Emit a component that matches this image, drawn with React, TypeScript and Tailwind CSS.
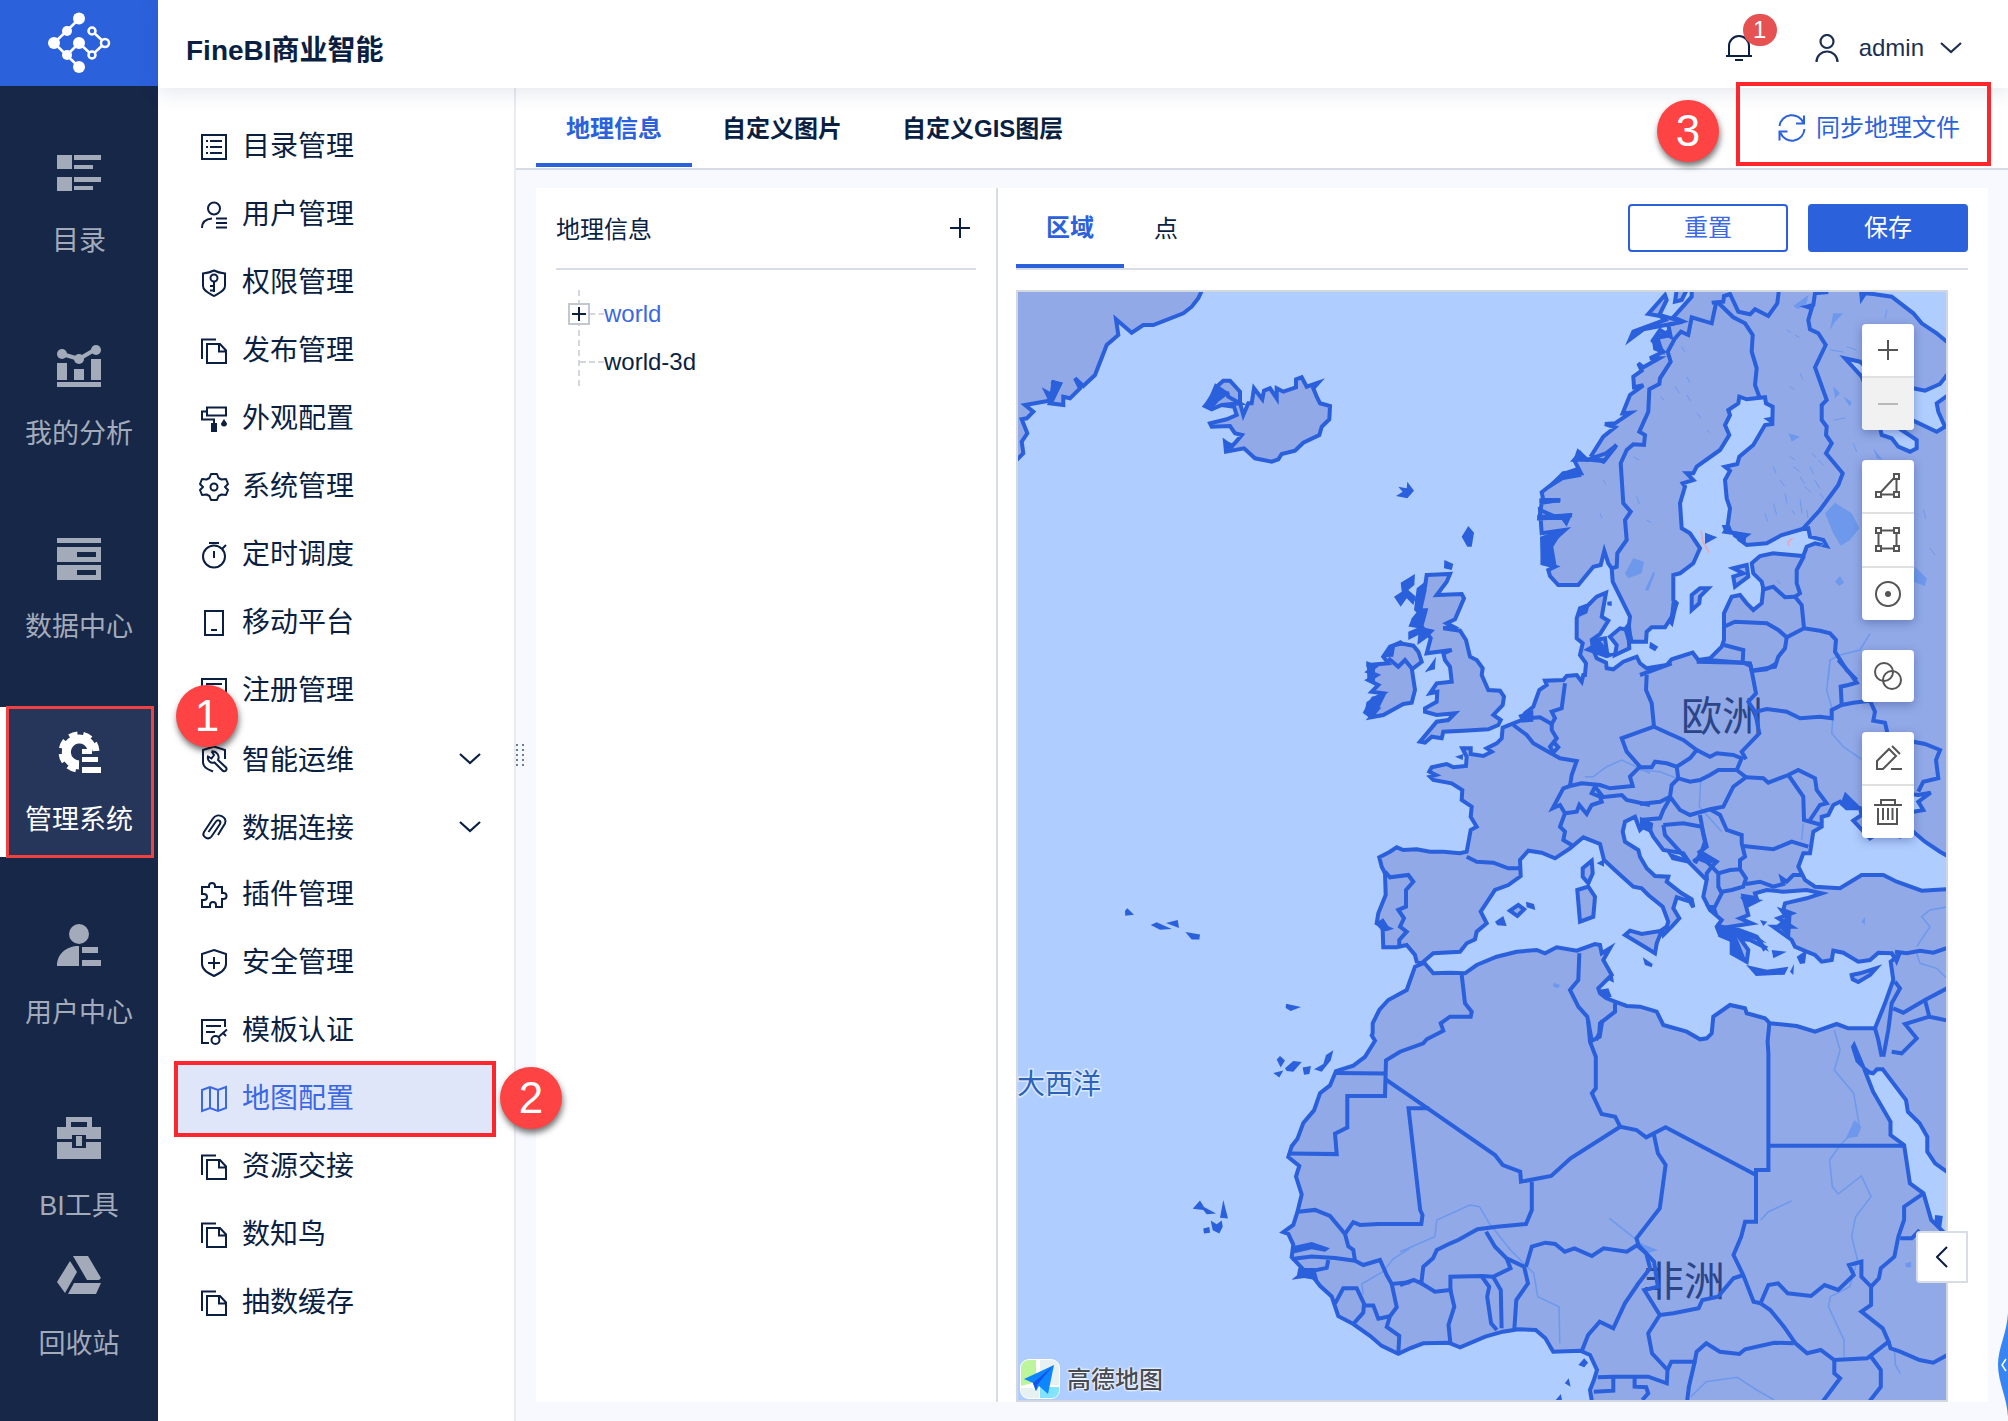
import React from "react";

/* ---------- map geometry ---------- */

type Sheet = [number, number, number, number];

// Every sheet: origin x, origin y, horizontal scale, vertical scale.
const NW: Sheet = [1010, 280, 3, 3];
const NE: Sheet = [1500, 280, 3, 3];
const CW: Sheet = [1300, 660, 3, 3];
const CE: Sheet = [1640, 660, 3, 3];
const SW: Sheet = [1010, 860, 3, 2.795];
const SE: Sheet = [1400, 1020, 2.579, 3];

function on(sheet: Sheet, pts: string): string {
  return pts
    .trim()
    .split(/\s+/)
    .map((p) => {
      const [x, y] = p.split(",").map(Number);
      return `${(sheet[0] + x / sheet[2]).toFixed(1)},${(sheet[1] + y / sheet[3]).toFixed(1)}`;
    })
    .join(" ");
}

const mainland = [
  on(NE, `575,0 575,50 520,112 548,124 505,135 512,170 480,150 458,182 490,215 450,235 478,235 430,262 415,250 425,272 400,290
  402,322 430,316 390,345 368,400 392,398 345,430 315,432 345,442 310,470 275,525 310,545 350,495 318,520 262,540 235,515 225,545
  243,580 190,580 165,605 125,637 130,660 180,660 125,668 118,715 190,712 215,705 165,710 120,690 125,760 195,750 150,790 130,810
  128,850 165,860 145,870 150,888 175,915 235,915 280,860 302,855 313,812 325,850 335,865 338,905 390,1010 385,1050 395,1085
  438,1085 440,1055 455,1042 495,1042 515,1010 530,970 520,960 520,885 540,880 580,850 600,805 570,760 545,745 540,670 555,620
  548,610 580,600 560,580 580,580 590,560 660,510 688,465 675,435 690,405 685,390 715,370 718,350 740,358 795,352 798,370 818,380
  817,432 795,435 760,495 718,530 712,552 675,560 690,572 675,600 680,655 690,685 682,745 675,755 740,765 720,780 740,795 800,790
  845,765 905,748 925,745 930,770 970,780 980,798 945,790 920,800 910,828 820,820 780,828 755,850 760,880 785,905 790,925 785,970
  760,990 740,970 720,945 695,950 672,1000 672,1080 665,1100 630,1135 595,1140 578,1118 515,1138 500,1155 440,1165 420,1150
  410,1130 370,1145 340,1168 320,1165 318,1148 290,1135 280,1110 275,1080 300,1062 325,1022 305,1010 318,938 290,950 265,975
  240,985 230,1015 230,1075 248,1090 240,1125 258,1150 255,1185`),
  on(CW, `850,45 845,65 830,45 800,48 790,60 735,62 740,75 718,90 700,140 675,160 665,180 640,190 608,203 605,235 590,250 560,265
  575,275 550,288 512,282 512,265 487,265 500,290 498,318 460,322 440,312 395,322 388,335 408,345 390,350 400,360 455,370 487,390
  485,420 515,440 512,470 530,500 512,510 500,575 480,580 430,575 390,575 350,568 310,570 290,562 270,575 238,592 245,620 255,640
  257,705 235,760 230,790 265,805 248,810 250,862 290,862 320,855 345,885 350,905 370,910 345,920 320,990 265,1020 238,1050
  218,1090 218,1120`),
  on(SW, `1085,490 1095,505 1065,550 1030,575 978,590 960,630 930,652 912,700 880,735 862,780 845,800 835,830 868,855 858,885
  875,935 862,985 850,1020 820,1040 835,1045 850,1075 845,1110 885,1150 865,1165 905,1160 930,1190 965,1220 985,1275 1030,1297
  1080,1330 1115,1358 1165,1380 1200,1365`),
  on(SE, `26,985 60,970 125,968 155,982 220,950 265,935 305,928 350,930 375,955 395,995 465,992 490,1005 508,1050 500,1080
  490,1110 500,1180 1460,1180 1460,-2300`),
].join(" ");

const seas = [
  // Mediterranean
  [
    on(CW, `370,905 400,880 480,875 500,850 525,838 530,815 560,790 542,755 585,690 625,675 662,648 660,600 685,572 725,578
    765,595 810,565 850,532 900,552 912,600 950,635 1000,680 1025,685`),
    on(CE, `25,705 68,740 85,785 80,800 65,810 70,825 95,800 118,775 100,745 110,712 150,725 160,742 155,718 125,700 80,665
    85,650 45,648 20,625 0,590`),
    on(CW, `1015,570 975,545 968,515 975,485 1005,470 1020,510`),
    on(CE, `20,490 40,530 70,570 130,580 150,610 200,660 190,710 210,750 245,780 230,800 240,825 275,840 275,880 320,905
    325,870 300,835 330,840 370,860 350,830 270,800 335,790 300,775 325,765 310,708 350,715 345,700 380,690 430,695 500,690
    545,700 500,715 435,730 430,750 455,760 415,775 455,800 400,800 455,840 465,860 500,875 525,885 545,905 575,900 580,872
    610,878 655,905 690,900 715,878 755,880 765,895 752,905 760,960 735,1030 705,1105 625,1105 590,1092 525,1115 470,1098
    390,1090 375,1075 320,1060 315,1045 270,1035 220,1070 215,1120 200,1135 180,1138 140,1115 70,1095 50,1055 0,1040`),
    on(CW, `980,1038 945,1025 920,1015 900,1000 895,985 935,945 910,900 930,865 905,880 900,855 885,852 830,872 770,862
    735,880 710,870 650,875 590,890 530,915 495,940 450,938 400,940`),
  ].join(" "),
  // Black Sea
  on(CE, `600,425 580,435 565,465 545,470 545,500 520,515 510,580 490,580 475,620 495,660 525,680 600,685 665,645 730,645
  770,665 845,692 960,685 960,610 900,575 855,545 820,515 780,530 720,515 690,535 640,482 665,465 660,445 620,445`),
  on(CE, `780,400 835,405 872,398 835,425 850,450 822,455 790,440`),
  // Red Sea
  on(SE, `1200,155 1220,215 1265,305 1265,345 1300,375 1315,490 1350,520 1370,600 1440,680 1440,480 1380,430 1360,395
  1360,350 1340,310 1310,275 1305,240 1245,148 1230,148 1220,160`),
  // Barents and White Sea
  on(NE, `1080,0 1085,55 1095,40 1120,42 1175,50 1240,100 1265,130 1310,160 1340,185 1400,220 1400,0`),
  on(NE, `1240,325 1275,332 1320,312 1345,280 1400,320 1345,345 1310,370 1315,395 1335,440 1310,455 1240,422 1205,450
  1250,480 1250,505 1230,515 1195,500 1175,475 1145,465 1130,400 1085,290 1035,235 1080,245 1120,280`),
];

const islands = [
  // Greenland
  on(NW, `0,0 590,0 565,55 545,80 520,100 430,135 400,135 365,158 318,118 325,165 290,195 255,285 220,318 195,295 210,325
  180,355 160,350 160,375 120,370 150,312 125,305 140,315 118,362 45,375 70,395 50,415 35,418 52,460 35,485 40,520 20,540 0,540`),
  // Iceland
  on(NW, `585,378 610,350 620,320 640,302 660,302 690,335 690,370 700,405 715,370 725,370 732,325 757,358 762,332 780,325
  800,355 800,325 820,335 858,322 858,298 875,292 890,320 925,308 910,325 920,350 930,370 960,378 958,418 935,440 928,465
  880,488 855,512 815,522 805,538 785,545 735,535 702,505 648,515 645,485 665,500 695,465 675,460 660,438 605,440 600,430
  650,418 680,405 672,380 635,375 605,388`),
  // Great Britain
  [
    on(NW, `1250,885 1320,882 1310,905 1280,945 1355,942 1362,955 1335,1018 1310,1030 1330,1040 1300,1045 1350,1052
    1368,1080 1380,1130`),
    on(CW, `530,0 548,25 545,45 565,90 600,92 612,110 608,135 580,165 602,180 595,195 565,208 490,212 430,215 425,235
    395,230 375,248 360,245 410,185 445,180 465,160 410,165 375,155 375,145 410,125 412,95 390,100 410,70 455,65 450,20 435,0`),
    on(NW, `1300,1120 1325,1110 1250,1120 1262,1075 1235,1040 1205,1035 1230,1000 1220,960 1245,920`),
  ].join(" "),
  // Ireland
  [
    on(NW, `1075,1155 1135,1150 1120,1130 1140,1100 1170,1090 1210,1097 1225,1115 1235,1145 1210,1165`),
    on(CW, `335,25 345,90 335,128 310,132 250,165 212,172 230,150 200,155 205,130 250,100 215,95 235,75 205,60 230,45 205,35
    225,20 205,12`),
  ].join(" "),
  // Corsica, Sardinia, Sicily
  on(CW, `848,625 875,602 878,640 865,670 848,650`),
  on(CW, `832,690 865,680 885,710 880,770 840,785`),
  on(CW, `975,825 990,812 1025,822 1085,812 1070,850 1065,880 1030,858`),
  // Crete, Cyprus
  on(CE, `335,925 350,942 430,938 435,928 380,935`),
  on(CE, `635,945 660,940 708,925 690,945 655,966 638,958`),
  // Baltic islands
  on(NE, `575,945 600,925 625,925 600,950 598,970 575,990`),
  on(NE, `700,865 740,855 745,890 705,920 700,890 730,880`),
  on(NE, `330,1070 360,1045 385,1050 388,1105 345,1125 350,1095`),
  on(NE, `285,1080 315,1075 320,1110 295,1115`),
  // Lofoten
  on(NE, `390,178 400,155 440,140 495,120 480,108 445,102 495,45 500,60 478,105 548,125 430,148`),
  on(NE, `525,65 530,30 560,30 545,60`),
  on(CW, `630,752 655,735 672,748 652,768`),
];

const islets = [
  on(NW, `1158,648 1178,635 1165,620 1190,625 1192,605 1212,632 1192,655`),
  on(NW, `1355,770 1375,738 1392,758 1385,800 1372,800`),
  on(NW, `1303,840 1330,852 1325,870 1302,865`),
  on(NW, `1172,908 1215,882 1213,915 1195,930 1218,950 1210,975 1190,955 1172,980 1152,950 1175,935`),
  on(NW, `1205,1015 1230,985 1255,985 1240,1040 1198,1035`),
  on(NW, `1195,1055 1230,1040 1275,1050 1250,1075 1222,1095 1225,1065 1195,1080`),
  on(NW, `1220,925 1245,905 1250,930 1232,1010 1212,990`),
  on(NW, `1245,1178 1278,1130 1275,1160`),
  on(NW, `1112,1132 1140,1095 1172,1080 1190,1095 1155,1100 1150,1130`),
  on(NW, `1072,1150 1100,1155 1090,1175 1100,1190 1072,1200`),
  on(NW, `578,380 600,345 615,310 660,340 625,365 605,390`),
  on(NW, `645,520 642,480 665,490 705,462 680,492`),
  on(NW, `95,322 120,335 125,300 158,308 130,368 115,362`),
  on(CW, `188,158 215,110 260,98 235,150 210,175`),
  on(CW, `200,12 225,20 225,70 205,65`),
  on(CW, `225,790 250,775 272,810 245,812`),
  on(CW, `375,35 405,0 405,28`),
  on(CW, `585,785 610,768 620,798 592,796`),
  on(CW, `678,725 702,732 706,750 680,742`),
  on(CW, `465,290 490,282 488,300`),
  on(CW, `655,165 700,150 700,185 665,188`),
  on(CW, `890,610 912,598 912,620`),
  on(CW, `925,960 938,945 942,968`),
  on(CW, `895,990 925,985 935,1010 912,1018`),
  on(CE, `8,892 38,912 35,922 15,915`),
  on(CE, `450,935 462,912 460,945`),
  on(CE, `300,710 370,720 320,745`),
  on(CE, `410,740 455,755 450,835 410,795 435,775`),
  on(CE, `360,780 382,785 370,798`),
  on(CE, `395,870 440,875 400,895`),
  on(CE, `355,845 385,860 370,875`),
  on(CE, `230,790 340,820 380,850 330,835 290,830 320,905 280,885 270,845 235,830`),
  on(CE, `0,470 40,490 35,520 0,505`),
  on(CE, `80,575 150,600 150,612 95,600`),
  on(CE, `195,735 225,735 235,765 210,755`),
  on(CE, `175,570 235,605 200,612 170,600`),
  on(CE, `470,890 500,870 495,910 480,912`),
  on(CE, `755,885 785,880 770,918`),
  on(CE, `600,435 615,395 650,430 665,445 620,450`),
  on(SW, `345,142 352,135 372,153 346,156`),
  on(SW, `422,182 440,174 485,193 450,195`),
  on(SW, `468,176 503,168 507,190`),
  on(SW, `526,201 570,208 568,222 545,222`),
  on(SW, `828,402 873,411 842,422 827,414`),
  on(SW, `800,558 810,548 825,560 812,580`),
  on(SW, `790,595 820,588 808,608`),
  on(SW, `825,582 850,562 875,565 850,592 830,590`),
  on(SW, `878,580 903,576 898,598 882,600`),
  on(SW, `912,585 940,570 948,545 970,532 962,560 935,592`),
  on(SW, `548,975 570,952 582,970 618,988 590,990 580,978`),
  on(SW, `630,1000 640,950 654,1002`),
  on(SW, `580,1030 598,1026 600,1042 582,1044`),
  on(SW, `602,1008 620,1018 635,1008 638,1025 628,1044 608,1035`),
  on(SW, `845,1080 905,1068 960,1085 945,1095 905,1088 850,1100`),
  on(SW, `865,1140 915,1140 925,1175 860,1165`),
  on(SE, `460,1035 475,1015 485,1028 475,1042`),
  on(SE, `425,1090 435,1075 440,1100`),
  on(SE, `1163,80 1172,62 1200,140 1222,160 1200,155 1175,125`),
  on(SE, `1380,585 1400,588 1395,630 1378,612`),
  on(SE, `400,1142 415,1122 418,1142`),
  on(NE, `615,758 652,772 615,792`),
  on(NE, `450,1085 475,1100 465,1114 448,1104`),
  on(NE, `322,965 335,964 335,978 322,976`),
  on(NE, `515,965 535,968 518,1042 508,1030`),
  on(NE, `118,655 182,655 180,668 118,668`),
  on(NE, `112,705 218,700 200,740 185,720 112,720`),
  on(NE, `120,770 195,745 160,800 170,860 122,855`),
  on(NE, `155,605 190,575 235,560 245,590 190,600 150,625`),
  on(NE, `210,545 240,510 262,535 315,535 345,490 350,505 315,550 270,545`),
  on(NE, `790,415 815,410 812,430`),
  on(NE, `455,175 510,145 512,172 480,178 495,225 460,210`),
  on(NE, `690,750 740,762 735,795 700,770`),
  on(NE, `665,735 690,735 700,760 675,760`),
  on(NE, `230,1000 270,970 262,1000 238,1010`),
  on(NE, `250,1110 300,1080 330,1120 390,1110 320,1135`),
  on(NE, `370,1045 390,1020 400,1090 380,1080`),
];

const borders = [
  on(NE, `655,68 700,112 735,130 758,165 755,215 770,265 765,315 778,350`),
  on(NE, `655,68 648,70 635,130 575,112 565,165 543,155 525,175 503,215 512,245 480,295 478,312 448,328 445,395 418,455
  435,465 432,495 400,493 380,510 362,550 370,670 392,695 375,720 380,780 352,820 350,860 335,865`),
  on(NE, `635,68 670,65 672,48 690,42 715,95 750,103 765,88 805,108 832,70 838,20`),
  on(NE, `985,36 945,40 940,75 920,80 935,85 925,120 930,148 955,160 977,195 945,262 980,360 965,375 965,420 980,440
  978,465 995,490 978,520 1028,580 1015,615 960,690 905,750`),
  on(NE, `785,930 820,920 855,952 885,950`),
  on(NE, `912,828 890,870 890,910 900,940 885,950 905,975 912,1045`),
  on(NE, `672,1040 705,1025 800,1030 835,1050 860,1072 912,1045 960,1052 990,1060 1008,1080 1005,1115 1040,1170 1070,1200`),
  on(NE, `860,1072 855,1105 835,1130 825,1160 755,1172 750,1150 625,1140`),
  on(NE, `672,1095 730,1110 728,1145`),
  on(CE, `0,45 95,10`),
  on(CE, `20,45 18,90 35,130 42,200`),
  on(CE, `42,200 0,215 -55,235 -40,275 0,320`),
  on(CW, `1020,320 990,350 998,378 930,385 900,375 845,370 810,378`),
  on(CW, `810,378 815,345 830,303 780,295 745,275 700,250 680,225 640,195`),
  on(CW, `680,175 720,172 755,192 765,175 755,155 785,145 795,70`),
  on(CW, `755,190 755,210 770,235 750,260 760,278 775,262 760,245`),
  on(CW, `810,378 790,385 758,445 780,435 795,460 830,455 838,435 860,462 875,435 905,425 900,410 875,400 885,380 910,412`),
  on(CW, `905,412 965,405 980,420 1050,435`),
  on(CW, `795,460 780,500 795,515 790,540 815,555`),
  on(CW, `500,590 530,605 580,608 625,625 662,625`),
  on(CW, `255,635 270,652 325,645 340,665 318,690 318,740 295,750 312,775 300,800 320,815 298,840 298,860`),
  on(CW, `485,945 495,1030 515,1055 512,1070 450,1070 422,1090 430,1112 380,1138`) + " " +
    on(SE, `60,70 0,95`) + " " + on(SW, `1128,560 1125,660 1012,660 1012,748 975,765 980,822 840,820`),
  on(SW, `978,595 1125,597`),
  on(CW, `838,880 835,960 810,990 835,1040 862,1070 875,1140`),
  on(CW, `945,1030 945,1055 900,1090 898,1120 888,1140`),
  on(CE, `170,5 310,8 332,18 348,100 325,125 345,155 358,220 305,275 318,298`),
  on(CE, `348,155 380,147 440,155 480,175 540,170 575,175 575,150 605,135 640,128 690,122 705,155 700,182 735,188 745,230
  820,245 855,252 900,270 888,300 895,355 850,365 835,395`),
  on(CE, `605,135 602,80 625,75 650,68 630,40 595,0`),
  on(CE, `340,32 380,28 410,10`),
  on(CE, `42,200 85,220 130,240 170,270 150,295 110,320 80,310 45,305 35,322 0,322`),
  on(CE, `170,270 210,290 230,280 280,285 305,295 290,330`),
  on(CE, `110,320 115,355 150,365 180,360 210,345 235,330 290,330`),
  on(CE, `115,355 95,375 90,410 60,425 0,432`),
  on(CE, `90,410 120,450 150,465 210,448 250,440 280,380 318,352 290,330`),
  on(CE, `318,352 370,355 385,368 445,345 475,330 525,355 530,390 560,430 540,435 510,480`),
  on(CE, `445,345 490,410 492,480 545,495`),
  on(CE, `310,558 400,568 455,545 505,560`),
  on(CE, `210,448 240,465 260,510 305,525 305,550 315,590 300,600 300,628`),
  on(CE, `70,495 130,490 185,500 195,545 180,590 160,605`),
  on(CE, `70,495 75,525 120,575 150,610`),
  on(CE, `180,465 190,520 200,560 180,575 230,605 215,620`),
  on(CE, `90,415 70,450 60,475 0,480`),
  on(CE, `165,610 180,585 215,620 200,640 200,660`),
  on(CE, `215,620 235,640 235,680 245,700 225,740 210,750`),
  on(CE, `235,640 270,630 300,628 318,655 310,680 275,690 245,695`),
  on(CE, `318,672 360,665 400,680 430,672 425,655 440,665 460,645 490,645`),
  on(CE, `765,875 800,880 840,872 880,878 940,858`),
  on(CE, `760,1045 790,1058 855,1020 940,975`),
  on(CE, `855,1020 868,1070 940,1085`),
  on(CE, `868,1070 795,1092 830,1135 800,1165 785,1180 755,1175`),
  on(CE, `765,965 780,985 755,1030 745,1110 730,1190`),
  on(CE, `705,1105 715,1140 725,1190`),
  on(SE, `953,5 948,65 950,100 950,450 918,450 918,605 890,605 880,650 860,705 885,765 912,845 930,850`),
  on(SE, `950,377 1300,377`),
  on(SE, `485,0 490,65 505,110 505,205 495,220 520,282 555,290 568,320 610,330 635,352 685,322 918,465`),
  on(SE, `522,0 515,50 490,65`),
  on(SW, `1125,612 1200,660`) + " " + on(SE, `245,405 265,435 310,455 312,485 390,468 440,415 568,320`),
  on(SE, `75,265 22,265 52,570 58,585 55,612 0,612`) + " " + on(SW, `1105,1017 1050,1020 1030,1012 1005,1045`),
  on(SE, `340,485 340,570 325,612 250,620 200,628 150,660 130,670 95,690 85,715 60,740 55,790 35,780 0,795`),
  on(SE, `655,345 665,400 685,435 670,565 610,655 615,675`),
  on(SE, `325,740 340,680 375,668 400,672 425,695 450,685 495,708 525,685 585,695 612,675`),
  on(SE, `222,635 245,680 275,715 320,740 330,790 300,840 295,925`),
  on(SE, `55,790 90,815 130,810 140,860 125,915 130,970`),
  on(SE, `130,815 130,770 210,768 240,770 285,745 275,715`),
  on(SE, `210,768 230,800 225,830 235,910 250,930`),
  on(SE, `240,770 260,810 262,925`),
  on(SE, `610,675 635,700 645,745 615,790 580,850 550,925 515,905 485,945 470,990`),
  on(SE, `615,675 655,725 665,800 630,810 670,885 640,940 650,1000 690,1050 688,1090 640,1070 550,1070 510,1072`),
  on(SE, `550,1070 550,1112 500,1115`),
  on(SE, `605,1072 605,1100 635,1102 640,1120 625,1140`),
  on(SE, `670,885 705,880 770,865 780,840 820,830 860,775 885,765`),
  on(SE, `690,1050 700,1025 760,1025 765,995 790,970 825,995 875,1002 890,988 965,968 1015,970`),
  on(SE, `760,1025 745,1100 740,1150`),
  on(SE, `930,850 955,870 990,920 1020,970 1050,1000 1085,990 1120,1020 1205,1015 1260,965 1245,925 1190,875 1215,855
  1215,800 1190,770 1190,725 1158,735 1170,765 1130,810 1095,795 1060,828 1000,820 975,790 950,795 930,850`),
  on(SE, `1350,520 1300,560 1300,600 1285,650 1275,710 1240,745 1235,775 1215,800`),
  on(SE, `1290,655 1320,655 1340,630`),
  on(SE, `1260,965 1265,985 1290,995 1340,1020 1375,1028 1420,1000`),
  on(SE, `1120,1020 1120,1060 1135,1075 1090,1145`),
  on(SE, `1215,1010 1240,1050 1240,1100 1210,1145`),
  on(SW, `865,983 915,978 960,995 1005,1045 1015,1080 1030,1090 1035,1120`),
  on(SW, `845,1115 905,1108 975,1112 1035,1120 1060,1132 1110,1118 1130,1160 1145,1185 1200,1180`),
  on(SW, `1145,1185 1160,1250 1140,1275 1130,1305 1168,1330 1165,1380`),
  on(SW, `955,1118 950,1140 900,1150`),
  on(SW, `975,1240 1000,1197 1040,1197 1062,1240 1060,1265 1030,1297`),
  on(SW, `1062,1245 1090,1245 1105,1282 1140,1275`),
  on(NW, `1135,1135 1165,1160 1185,1140 1205,1165`),
  on(NW, `650,335 655,350 690,370 635,375`),
];

const rivers = [
  on(SE, `1120,30 1135,90 1120,150 1170,220 1185,320 1135,375 1108,420 1115,500 1130,522 1190,468 1215,530 1175,590
  1165,650 1180,720 1160,800 1110,830 1105,860 1145,960 1145,1010`),
  on(SE, `0,695 90,650 95,600 180,555 205,560 230,610 285,690 345,760 355,830 410,860 412,970`),
  on(SE, `750,1130 790,1085 870,1072 920,1110 965,1140`),
  on(SE, `930,600 950,575 1010,543`),
  on(SE, `1275,990 1278,1035 1290,1060`),
  on(SE, `540,595 600,650 640,690`),
  on(SW, `1200,1085 1150,1115 1120,1150 1055,1185 1060,1215`),
  on(CW, `855,350 880,350 920,320 965,300 1050,340`),
  on(CE, `0,330 60,335 110,355`),
  on(CE, `182,360 178,440 245,515`),
  on(CE, `570,0 560,90 580,160 575,220 610,260 665,298`),
  on(CE, `490,490 485,540`),
  on(CE, `925,740 870,750 845,770 870,800 830,860`),
  on(CE, `830,880 840,910 890,925 925,960`),
  on(NE, `1110,1060 1080,1110 1020,1125 990,1140 985,1200`),
];

const lakes = [
  on(NE, `975,700 1005,668 1055,700 1078,745 1050,780 1022,797 1000,760`),
  on(NE, `375,880 400,835 432,845 425,880 385,895`),
  on(NE, `435,930 460,875 465,880 445,932`),
  on(NE, `1245,860 1280,895 1275,918 1240,905`),
  on(NE, `880,78 925,45 920,70 895,88`),
  on(NE, `865,460 900,470 875,485`),
  on(NE, `1000,320 1020,340 1005,355`),
  on(NE, `1030,350 1055,365 1050,380`),
  on(NE, `1120,505 1148,540 1130,535`),
  on(NE, `1005,905 1020,888 1032,908 1018,918`),
  on(SE, `1172,300 1190,320 1180,350 1150,355`),
  on(SE, `1303,730 1318,725 1318,742 1305,742`),
  on(SE, `620,670 665,690 640,700`),
  on(CW, `760,968 780,975 775,985 760,980`),
  on(CE, `665,785 675,770 675,795`),
  on(NE, `1000,100 1030,100 1005,125 990,150`),
];

// Small Finnish and Swedish lakes: start point, then length and slant.
const ponds: [number, number, number, number][] = [
  [820, 560, 8, 20], [840, 600, 14, 18], [855, 640, 6, 30], [820, 670, 10, 34], [880, 560, 18, 14], [900, 590, 14, 22],
  [915, 620, 18, 18], [930, 560, 12, 24], [945, 600, 14, 26], [900, 660, 6, 40], [920, 690, 4, 24], [955, 540, 16, 16],
  [875, 690, 10, 14], [795, 700, 8, 24], [960, 640, 12, 16], [870, 530, 16, 10], [935, 520, 14, 12], [545, 200, 10, 16],
  [560, 290, 10, 18], [525, 320, 14, 20], [560, 345, 12, 18], [480, 350, 12, 10], [590, 400, 14, 14], [400, 530, 18, 10],
  [410, 650, 8, 22], [440, 720, 14, 8], [300, 700, 6, 16], [310, 600, 8, 14], [860, 150, 14, 8], [885, 165, 14, 8],
  [990, 210, 40, 6], [1040, 200, 30, 10], [870, 320, 12, 8], [900, 280, 8, 18], [1000, 420, 36, -6], [1060, 490, 10, 26],
  [1270, 690, 8, 26], [1290, 805, 16, 20], [1160, 90, -4, 26], [960, 800, 12, -10], [830, 900, 12, 12], [620, 450, 10, 8],
];

function GeoMap() {
  return (
    <svg
      className="absolute inset-0 h-full w-full"
      viewBox="1018 292 928 1108"
      preserveAspectRatio="xMinYMin slice"
      role="img"
      aria-label="世界地图"
    >
      <rect x="0" y="0" width="4000" height="4000" fill="#b0cdff" />
      <g fill="#91a9e7" stroke="#2a60db" strokeWidth="4">
        <polygon points={mainland} />
      </g>
      <g fill="none" stroke="#6e98ec" strokeWidth="1.5">
        {rivers.map((p) => (
          <polyline key={p} points={p} />
        ))}
      </g>
      <g fill="#6e98ec">
        {lakes.map((p) => (
          <polygon key={p} points={p} />
        ))}
      </g>
      <g stroke="#6e98ec" strokeWidth="1">
        {ponds.map(([x, y, dx, dy]) => (
          <line key={`${x}-${y}`} x1={1500 + x / 3} y1={280 + y / 3} x2={1500 + (x + dx) / 3} y2={280 + (y + dy) / 3} />
        ))}
      </g>
      <text x="1681" y="731" fontSize="41" fill="#2b4588">欧洲</text>
      <text x="1643" y="1296" fontSize="41" fill="#2b4588">非洲</text>
      <g fill="#b0cdff" stroke="#2a60db" strokeWidth="4">
        {seas.map((p) => (
          <polygon key={p} points={p} />
        ))}
      </g>
      <g fill="#91a9e7" stroke="#2a60db" strokeWidth="4">
        {islands.map((p) => (
          <polygon key={p} points={p} />
        ))}
      </g>
      <g fill="none" stroke="#2a60db" strokeWidth="4">
        {borders.map((p) => (
          <polyline key={p} points={p} />
        ))}
      </g>
      <g fill="#2a60db">
        {islets.map((p) => (
          <polygon key={p} points={p} />
        ))}
      </g>
      <g fill="none" stroke="#eba5b4" strokeWidth="1.5">
        <polyline points={on(NE, "603,752 608,785 628,818")} />
        <polyline points={on(NE, "878,775 864,785 866,798")} />
      </g>
      <text x="1017" y="1094" fontSize="28" fill="#2c63b8" stroke="#d9e7ff" strokeWidth="3" paintOrder="stroke">
        大西洋
      </text>
    </svg>
  );
}

/* ---------- icons ---------- */

const Logo = () => (
  <svg className="h-[62px] w-[64px]" viewBox="46 11 64 62" fill="none" stroke="#fff" strokeWidth="2.5" aria-hidden="true">
    <path d="M78 18 53 42 78 66M66 54 78 42 91 54 104 42 91 30" />
    <g fill="#fff" stroke="none">
      <circle cx="78" cy="17.500" r="6" />
      <circle cx="66" cy="30" r="5" />
      <circle cx="53" cy="42" r="6" />
      <circle cx="78" cy="42" r="6" />
      <circle cx="66" cy="54" r="5" />
      <circle cx="78" cy="66" r="6" />
    </g>
    <g fill="#2c61dc">
      <circle cx="91" cy="30" r="3.500" />
      <circle cx="104" cy="42" r="4" />
      <circle cx="91" cy="54" r="3.500" />
    </g>
  </svg>
);

const railIcons: Record<string, React.ReactNode> = {
  list: <path d="M0 3h15v14H0zM17 3h27v5H17zM17 13h19v4H17zM0 25h15v14H0zM17 25h27v5H17zM17 34h19v4H17z" />,
  chart: (
    <>
      <path d="M0 18h10v17H0zM17 24h10v11H17zM34 14h10v21H34zM0 37h44v5H0z" />
      <path d="M5 9 22 14 39 4" fill="none" stroke="currentColor" strokeWidth="4" />
      <circle cx="5" cy="9" r="5" />
      <circle cx="22" cy="14" r="5" />
      <circle cx="39" cy="5" r="5" />
    </>
  ),
  data: <path fillRule="evenodd" d="M0 0h44v5H0zM0 9h44v15H0zM20 14v5h19v-5zM0 27h44v15H0zM20 32v5h19v-5z" />,
  gear: (
    <>
      <path d="M39 20A17 17 0 1 0 22 38" fill="none" stroke="currentColor" strokeWidth="7" strokeDasharray="8 5.500" />
      <path d="M35 18A13 13 0 1 0 22 34" fill="none" stroke="currentColor" strokeWidth="9" />
      <path d="M25 18h10v5H25zM25 26h16v5H25zM25 36h19v6H25z" />
    </>
  ),
  user: (
    <>
      <circle cx="22" cy="10" r="10" />
      <path d="M0 42C0 30 9 22 22 22v20zM25 23h16v6H25zM25 36h19v6H25z" />
    </>
  ),
  tools: <path fillRule="evenodd" d="M9 10V0h26v10h9v12H29v-4H15v4H0V10zM14 10h16V5H14zM0 25h15v6h14v-6h15v17H0zM19 19h6v10h-6z" />,
  bin: (
    <>
      <path d="M16 1h15l13 22-2 2H30z" />
      <path d="M13 6 20 17 8 38 0 27z" />
      <path d="M17 28h27l-5 11H11z" />
    </>
  ),
};

const S = { fill: "none", stroke: "currentColor", strokeWidth: 2 } as const;

const menuIcons: Record<string, React.ReactNode> = {
  catalog: <path {...S} d="M1 1h24v24H1zM5 7h2M9 7h12M5 13h2M9 13h12M5 19h2M9 19h12" />,
  users: (
    <g {...S}>
      <circle cx="13" cy="6.500" r="6" />
      <path d="M1 26c0-6 4-9 10-9.500M15 16.500h11M15 21h11M15 25.500h11" />
    </g>
  ),
  key: (
    <g {...S}>
      <path d="M13 .5c4 2 7 2.500 11 3V16c0 5-6 7-11 10C8 23 2 21 2 16V3.500c4-.5 7-1 11-3z" />
      <circle cx="13" cy="8" r="3.500" />
      <path d="M13 12v10M13 16h-4M13 20.500h-4" />
    </g>
  ),
  copy: <path {...S} d="M1 21V1.500h14M6 6h13l6 6.500V25H6zM18 6v7.500h7" />,
  roller: (
    <g {...S}>
      <path d="M6 1.500h19v8H6zM6 5.500H1v8h12v5" />
      <path d="M10 17h6v9h-6zM23 13l-3 4.500a3 3 0 1 0 6 0z" fill="currentColor" stroke="none" />
    </g>
  ),
  gear: (
    <g {...S}>
      <path d="M10 0h6l1.500 4 3 1.500L25 5l2 5-3 3 3 3-2 5-4.500-.500-3 1.500L16 26h-6l-1.500-4-3-1.500L1 21l-2-5 3-3-3-3 2-5 4.500.500 3-1.500z" strokeLinejoin="round" />
      <circle cx="13" cy="13" r="3.500" />
    </g>
  ),
  timer: (
    <g {...S}>
      <circle cx="13" cy="14.500" r="11" />
      <path d="M8 1h10M13 9v7M21 7l4-4" />
    </g>
  ),
  phone: <path {...S} d="M4 1h18v24H4zM10 20h6" />,
  register: <path {...S} d="M1 1h24v24H1zM5 6h16" />,
  ops: (
    <g {...S}>
      <path d="M24 13V4L13 .5 2 4v12c0 5 4 7 10 9.500" />
      <path d="M10.500 5.500 13 9l-2.500 3.500L7 10.500a5 5 0 0 0 6.500 6l8 8a2.200 2.200 0 0 0 3.500-3l-8-7.500a6 6 0 0 0-6.500-8.500" />
    </g>
  ),
  clip: <path {...S} d="M7.500 18 15 7.500c2-2.500 5.500-.5 4 2.500L10.500 22.500c-3 4-10 .5-7.500-4.500L12 4.500C16-2 27 3 24 9.500L17 21" />,
  plugin: <path {...S} d="M1 5h7V4a3 3 0 0 1 6 0v1h7v6h1.500a3 3 0 0 1 0 6H21v8h-6v-2a3 3 0 0 0-6 0v2H1v-7h2a3 3 0 0 0 0-6H1z" />,
  shield: <path {...S} d="M13 0 25 4v10c0 6-6 9-12 12C7 23 1 20 1 14V4zM13 7v12M7 13h12" />,
  cert: (
    <g {...S}>
      <path d="M8 25H1V2h23v7M5 8h15M5 14h9" />
      <circle cx="14.500" cy="22" r="4" />
      <path d="m17.500 19 8.500-7.500M22 15l3 3" />
    </g>
  ),
  map: <path {...S} d="m1 4 8-3 8 3 8-3v21l-8 3-8-3-8 3zM9 1v21M17 4v21" />,
};

const Chevron = () => (
  <svg className="h-3 w-[22px]" viewBox="0 0 22 12" fill="none" stroke="currentColor" strokeWidth="2.200" aria-hidden="true">
    <path d="m1 1 10 9L21 1" />
  </svg>
);

const toolIcons: Record<string, React.ReactNode> = {
  plus: <path d="M14 4v20M4 14h20" />,
  minus: <path d="M4 14h20" />,
  polygon: <path d="M20 2h5v5h-5zM2 20h5v5H2zM20 20h5v5h-5zM7 20 20 6M22.500 7v13M7 22.500h13" />,
  rect: <path d="M2 2h5v5H2zM20 2h5v5h-5zM2 20h5v5H2zM20 20h5v5h-5zM7 4.500h13M7 22.500h13M4.500 7v13M22.500 7v13" />,
  circle: (
    <>
      <circle cx="14" cy="14" r="12" />
      <circle cx="14" cy="14" r="3" fill="currentColor" stroke="none" />
    </>
  ),
  overlap: (
    <>
      <circle cx="10" cy="10" r="9" />
      <circle cx="18" cy="18" r="9" />
    </>
  ),
  edit: <path d="M3 25v-8L15 5l7 7-13 13zM18 2l8 8M17 25h11" />,
  trash: <path d="M0 7h28M7 7V2h14v5M4 10v16h19V10M9 10v12M14 10v12M18.500 10v12" />,
};

/* ---------- data ---------- */

const rail = [
  { label: "目录", icon: "list" },
  { label: "我的分析", icon: "chart" },
  { label: "数据中心", icon: "data" },
  { label: "管理系统", icon: "gear", active: true },
  { label: "用户中心", icon: "user" },
  { label: "BI工具", icon: "tools" },
];

const menu = [
  { label: "目录管理", icon: "catalog" },
  { label: "用户管理", icon: "users" },
  { label: "权限管理", icon: "key" },
  { label: "发布管理", icon: "copy" },
  { label: "外观配置", icon: "roller" },
  { label: "系统管理", icon: "gear" },
  { label: "定时调度", icon: "timer" },
  { label: "移动平台", icon: "phone" },
  { label: "注册管理", icon: "register" },
  { label: "智能运维", icon: "ops", expandable: true },
  { label: "数据连接", icon: "clip", expandable: true },
  { label: "插件管理", icon: "plugin" },
  { label: "安全管理", icon: "shield" },
  { label: "模板认证", icon: "cert" },
  { label: "地图配置", icon: "map", active: true },
  { label: "资源交接", icon: "copy" },
  { label: "数知鸟", icon: "copy" },
  { label: "抽数缓存", icon: "copy" },
];

const tools: { id: string; label: string; disabled?: boolean }[][] = [
  [{ id: "plus", label: "放大" }, { id: "minus", label: "缩小", disabled: true }],
  [{ id: "polygon", label: "多边形" }, { id: "rect", label: "矩形" }, { id: "circle", label: "圆形" }],
  [{ id: "overlap", label: "合并" }],
  [{ id: "edit", label: "编辑" }, { id: "trash", label: "删除" }],
];

/* ---------- parts ---------- */

function Marker({ n, className }: { n: number; className: string }) {
  return (
    <span
      className={`pointer-events-none absolute z-30 flex size-[62px] items-center justify-center rounded-full bg-[#fe4344] text-[44px] font-normal leading-none text-white shadow-[1px_4px_6px_rgba(0,0,0,0.55)] ${className}`}
    >
      {n}
    </span>
  );
}

function RailItem({ label, icon, active, className = "" }: { label: string; icon: string; active?: boolean; className?: string }) {
  return (
    <a
      href="#"
      className={`relative flex h-[150px] shrink-0 flex-col items-center pt-6 text-[27px] leading-9 ${
        active ? "mr-1 border-l-[6px] border-white bg-[#26365a] pr-0.5 text-white" : "text-[#a3abba]"
      } ${className}`}
    >
      <svg className="h-[42px] w-[44px]" viewBox="0 0 44 42" fill="currentColor" aria-hidden="true">
        {railIcons[icon]}
      </svg>
      <span className="mt-[29px] whitespace-nowrap">{label}</span>
      {active && <span className="absolute -inset-y-px left-0 right-0 border-[3px] border-[#f0403f]" />}
    </a>
  );
}

export default function App() {
  return (
    <div className="flex min-h-screen overflow-hidden bg-[#f8f9fe] font-['Liberation_Sans','Noto_Sans_CJK_SC',sans-serif] text-[#0b1f43]">
      <nav aria-label="主导航" className="flex w-[158px] shrink-0 flex-col bg-[#162748]">
        <a href="#" aria-label="FineBI" className="flex h-[86px] items-center justify-center bg-[#2c61dc]">
          <Logo />
        </a>
        <div className="flex flex-col gap-[43px] pt-[42px]">
          {rail.map((r) => (
            <RailItem key={r.label} {...r} />
          ))}
        </div>
        <RailItem label="回收站" icon="bin" className="-mt-3" />
      </nav>

      <div className="flex min-w-0 flex-1 flex-col">
        <header className="relative z-10 flex h-[88px] shrink-0 items-center justify-between bg-white pl-7 pr-[46px] shadow-[0_4px_20px_rgba(30,50,100,0.12)]">
          <h1 className="pt-3.5 text-[28px] font-bold leading-9">FineBI商业智能</h1>
          <div className="flex items-center pt-2">
            <button type="button" aria-label="消息" className="relative">
              <svg className="h-7 w-[26px]" viewBox="0 0 26 28" fill="none" stroke="currentColor" strokeWidth="2" aria-hidden="true">
                <path d="M3 22V12a10 10 0 0 1 20 0v10M0 22h26M9 26h8" />
              </svg>
              <span className="absolute -top-5 left-[17px] flex h-8 w-[34px] items-center justify-center rounded-full bg-[#e65251] text-2xl leading-none text-white">
                1
              </span>
            </button>
            <button type="button" className="ml-[63px] flex items-center text-2xl leading-8 text-[#1c2f52]">
              <svg className="h-7 w-6" viewBox="0 0 24 28" fill="none" stroke="currentColor" strokeWidth="2.200" aria-hidden="true">
                <circle cx="12" cy="7.500" r="6.500" />
                <path d="M1.500 28a10.500 10.500 0 0 1 21 0" />
              </svg>
              <span className="ml-5 mr-4">admin</span>
              <Chevron />
            </button>
          </div>
        </header>

        <div className="flex min-h-0 flex-1">
          <aside className="relative w-[358px] shrink-0 border-r-2 border-[#eaebf2] bg-white pt-[25px]">
            <ul>
              {menu.map((m) => (
                <li key={m.label} className={`ml-5 mr-[22px] ${m.active ? "bg-[#e0e6fa] text-[#3b68e4] ring-4 ring-[#fc262c]" : ""}`}>
                  <a href="#" className="flex h-[68px] items-center pl-[23px] pr-[11px] text-[28px] leading-10">
                    <svg className="size-[26px] overflow-visible" viewBox="0 0 26 26" aria-hidden="true">
                      {menuIcons[m.icon]}
                    </svg>
                    <span className={`ml-[15px] flex-1 ${m.expandable ? "pt-1" : ""}`}>{m.label}</span>
                    {m.expandable && <Chevron />}
                  </a>
                </li>
              ))}
            </ul>
            <Marker n={1} className="left-[18px] top-[597px]" />
            <Marker n={2} className="left-[342px] top-[979px]" />
            <span className="absolute -right-2.5 top-[656px] z-10 grid grid-cols-2 gap-x-1 gap-y-[3px]">
              {Array.from({ length: 10 }, (_, i) => (
                <i key={i} className="size-0.5 bg-[#6d7a93]" />
              ))}
            </span>
          </aside>

          <main className="flex min-w-0 flex-1 flex-col">
            <div className="relative flex h-[82px] shrink-0 items-stretch border-b-2 border-[#d8dce4] bg-white pl-5 text-2xl font-bold leading-8">
              <button type="button" className="mb-px border-b-4 border-[#2c61dc] px-[30px] pt-1.5 text-[#2c61dc]">地理信息</button>
              <button type="button" className="px-[30px] pt-0.5">自定义图片</button>
              <button type="button" className="px-[30px] pt-0.5">自定义GIS图层</button>
              <button type="button" className="ml-auto mr-12 flex items-center gap-2.5 font-normal text-[#2c61dc]">
                <svg className="size-7" viewBox="0 0 28 28" fill="none" stroke="currentColor" strokeWidth="2" aria-hidden="true">
                  <path d="M1.500 12A12.500 12.500 0 0 1 25.500 9M26 1.500V9.500H18M26.500 15A12.500 12.500 0 0 1 2.500 19M1.500 26.500V17.500H9.500" />
                </svg>
                同步地理文件
              </button>
              <span className="pointer-events-none absolute -top-1.5 right-[17px] z-20 h-[84px] w-[255px] border-4 border-[#fc262c]" />
              <Marker n={3} className="right-[289px] top-3" />
            </div>

            <div className="ml-5 mr-5 mt-[18px] mb-[19px] flex flex-1 bg-white">
              <section className="w-[462px] shrink-0 border-r-2 border-[#d8dce4] px-5">
                <div className="flex h-[82px] items-center justify-between border-b-2 border-[#d8dce4] pr-1.5">
                  <h2 className="pt-1 text-2xl leading-8">地理信息</h2>
                  <button type="button" aria-label="添加">
                    <svg className="size-5" viewBox="0 0 20 20" stroke="currentColor" strokeWidth="2" aria-hidden="true">
                      <path d="M10 0v20M0 10h20" />
                    </svg>
                  </button>
                </div>
                <ul className="relative ml-3 pt-5 text-2xl leading-[48px]">
                  <li className="flex items-center">
                    <span className="absolute left-2.5 top-5 h-24 border-l-2 border-dashed border-[#d3d6dd]" />
                    <button type="button" aria-label="展开" className="relative size-[22px] border-2 border-[#c3c7d0] bg-white">
                      <svg className="size-[18px]" viewBox="0 0 18 18" stroke="currentColor" strokeWidth="2" aria-hidden="true">
                        <path d="M9 2v14M2 9h14" />
                      </svg>
                    </button>
                    <span className="w-3.5 border-t-2 border-dashed border-[#d3d6dd]" />
                    <a href="#" className="text-[#3b68e4]">world</a>
                  </li>
                  <li className="flex items-center pl-3">
                    <span className="w-6 border-t-2 border-dashed border-[#d3d6dd]" />
                    <a href="#">world-3d</a>
                  </li>
                </ul>
              </section>

              <section className="flex min-w-0 flex-1 flex-col pl-[18px] pr-5">
                <div className="flex h-[82px] shrink-0 items-center border-b-2 border-[#d8dce4] text-2xl leading-8">
                  <button type="button" className="h-20 border-b-4 border-[#2c61dc] px-[30px] pt-1 font-bold text-[#2c61dc]">区域</button>
                  <button type="button" className="px-[30px] pt-0.5">点</button>
                  <button type="button" className="ml-auto h-12 w-40 rounded border-2 border-[#2c61dc] text-[#3b68e4]">重置</button>
                  <button type="button" className="ml-5 h-12 w-40 rounded bg-[#2c61dc] text-white">保存</button>
                </div>
                <div className="relative mt-5 flex-1">
                  <div className="relative mr-5 h-full overflow-hidden border-2 border-[#d3d7e0]">
                    <GeoMap />
                    <div className="absolute right-8 top-8 flex flex-col gap-[30px]">
                      {tools.map((group) => (
                        <div key={group[0].id} className="divide-y-2 divide-[#e0e0e0] overflow-hidden rounded bg-white shadow-[0_3px_10px_rgba(30,50,110,0.35)]">
                          {group.map((t) => (
                            <button
                              key={t.id}
                              type="button"
                              aria-label={t.label}
                              disabled={t.disabled}
                              className={`box-content flex h-[52px] w-[52px] items-center justify-center ${t.disabled ? "bg-[#f1f1f1] text-[#b9b9b9]" : "text-[#555]"}`}
                            >
                              <svg className="size-7" viewBox="0 0 28 28" fill="none" stroke="currentColor" strokeWidth="2" aria-hidden="true">
                                {toolIcons[t.id]}
                              </svg>
                            </button>
                          ))}
                        </div>
                      ))}
                    </div>
                    <div className="absolute bottom-px left-0.5 flex items-center gap-[7px]">
                      <svg className="size-10" viewBox="0 0 40 40" aria-hidden="true">
                        <rect width="40" height="40" rx="9" fill="#fff" />
                        <path d="M1 9a8 8 0 0 1 8-8h7v22L1 27z" fill="#bdf59d" />
                        <path d="M20 1h12a8 8 0 0 1 7 8v17H20zM1 29h18v10H9a8 8 0 0 1-8-7z" fill="#e8f1f2" />
                        <path d="M20 28h19v4a8 8 0 0 1-7 7H20z" fill="#81e3ff" />
                        <path d="M34 6 4 20l9 4 3 8 3-5 9 8z" fill="#0d86ff" />
                        <path d="M34 6 13 24l3 8 1-6z" fill="#1256e8" />
                      </svg>
                      <span className="pt-0.5 text-2xl font-medium leading-8 text-[#474c55] [text-shadow:0_0_2px_#fff,0_0_2px_#fff,0_0_3px_#fff]">高德地图</span>
                    </div>
                  </div>
                  <button
                    type="button"
                    aria-label="展开面板"
                    className="absolute bottom-[119px] right-0 flex size-[52px] items-center justify-center rounded-l border-2 border-[#d8dce4] bg-white"
                  >
                    <svg className="h-[22px] w-3" viewBox="0 0 12 22" fill="none" stroke="currentColor" strokeWidth="2" aria-hidden="true">
                      <path d="M11 1 1 11l10 10" />
                    </svg>
                  </button>
                </div>
              </section>
            </div>
          </main>
        </div>
      </div>
      <button type="button" aria-label="展开侧栏" className="fixed bottom-1 right-0 z-20">
        <svg className="h-[104px] w-2.5" viewBox="0 0 10 104" aria-hidden="true">
          <path d="M10 0C9 20 0 35 0 52s9 32 10 52z" fill="#3685f2" />
          <path d="M8 46 4 52l4 6" fill="none" stroke="#fff" strokeWidth="1.500" />
        </svg>
      </button>
    </div>
  );
}
